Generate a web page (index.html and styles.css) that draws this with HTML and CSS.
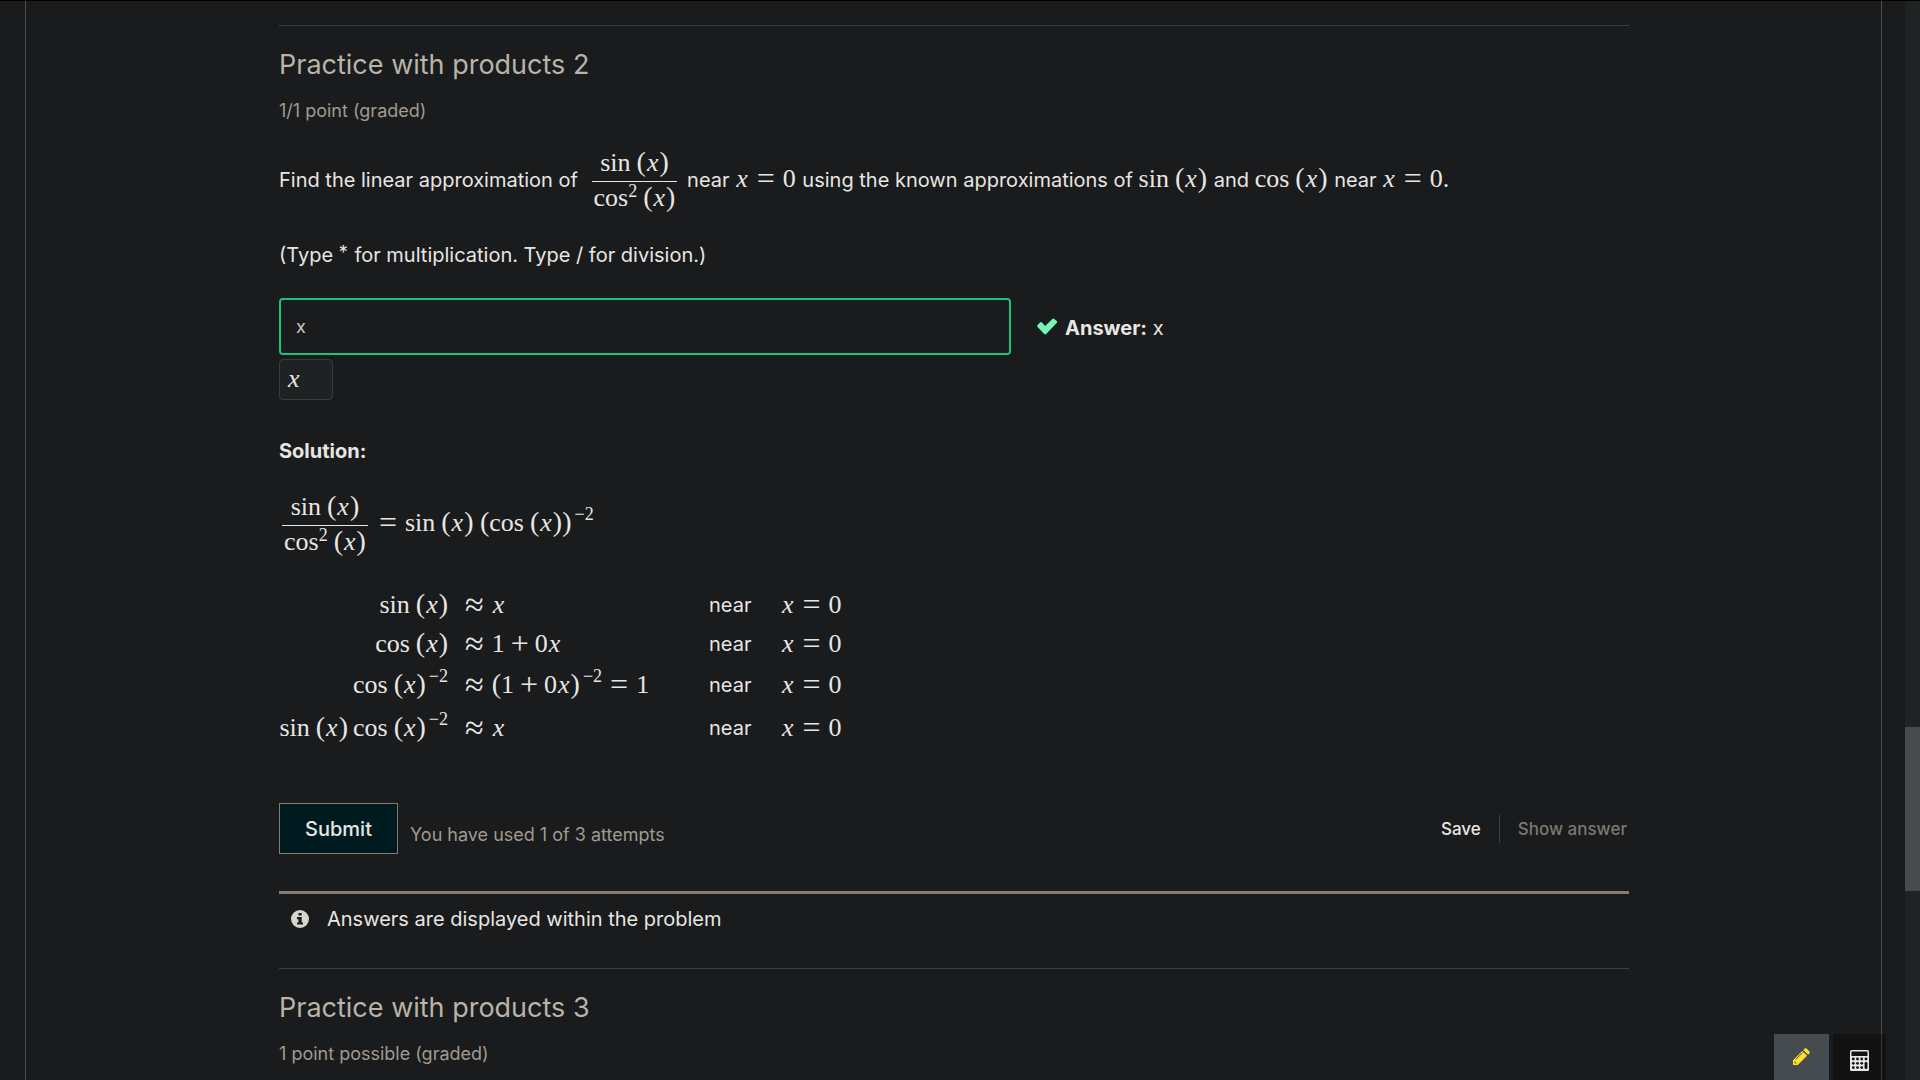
FILE: index.html
```html
<!DOCTYPE html>
<html lang="en">
<head>
<meta charset="utf-8">
<title>Practice with products</title>
<link rel="stylesheet" href="styles.css">
</head>
<body>
<div class="page">
  <main class="frame">
    <section class="problem">
      <h3 class="title">Practice with products 2</h3>
      <div class="progress">1/1 point (graded)</div>
      <p class="statement">Find the linear approximation of <span class="math frac"><span class="num"><span class="fn">sin</span><span class="par">(</span><i>x</i><span class="par">)</span></span><span class="den"><span class="fn">cos<sup class="sq">2</sup></span><span class="par">(</span><i>x</i><span class="par">)</span></span></span> near <span class="math"><i>x</i><span class="rel">=</span>0</span> using the known approximations of <span class="math"><span class="fn">sin</span><span class="par">(</span><i>x</i><span class="par">)</span></span> and <span class="math"><span class="fn">cos</span><span class="par">(</span><i>x</i><span class="par">)</span></span> near <span class="math"><i>x</i><span class="rel">=</span>0.</span></p>
      <p class="hint">(Type <sup class="star">*</sup> for multiplication. Type / for division.)</p>
      <div class="response">
        <input class="answer-input" type="text" value="x" aria-label="Your answer">
        <svg class="check" viewBox="0 0 22 17" aria-hidden="true"><path d="M2 6.500l2-2q1-.8 2 0l3.200 3.400L16.300.900q1-1 2 0l2.400 2.200q.9 1 0 2L10.200 16q-1 .9-2 0L1.600 9q-1-1.200.4-2.500z"/></svg>
        <p class="answer"><strong>Answer:</strong> x</p>
      </div>
      <div class="preview math"><i>x</i></div>

      <h4 class="solution">Solution:</h4>
      <p class="equation"><span class="math frac"><span class="num"><span class="fn">sin</span><span class="par">(</span><i>x</i><span class="par">)</span></span><span class="den"><span class="fn">cos<sup class="sq">2</sup></span><span class="par">(</span><i>x</i><span class="par">)</span></span></span><span class="math"><span class="rel">=</span><span class="fn">sin</span><span class="par">(</span><i>x</i><span class="par">)</span> <span class="par">(</span><span class="fn">cos</span><span class="par">(</span><i>x</i><span class="par">))</span><sup>−2</sup></span></p>
      <table class="align">
        <tr>
          <td class="lhs math"><span class="fn">sin</span><span class="par">(</span><i>x</i><span class="par">)</span></td>
          <td class="rhs math"><span class="approx">≈</span><i>x</i></td>
          <td class="near">near</td>
          <td class="math"><i>x</i><span class="rel">=</span>0</td>
        </tr>
        <tr>
          <td class="lhs math"><span class="fn">cos</span><span class="par">(</span><i>x</i><span class="par">)</span></td>
          <td class="rhs math"><span class="approx">≈</span>1<span class="op">+</span>0<i>x</i></td>
          <td class="near">near</td>
          <td class="math"><i>x</i><span class="rel">=</span>0</td>
        </tr>
        <tr class="tall">
          <td class="lhs math"><span class="fn">cos</span><span class="par">(</span><i>x</i><span class="par">)</span><sup>−2</sup></td>
          <td class="rhs math"><span class="approx">≈</span><span class="par">(</span>1<span class="op">+</span>0<i>x</i><span class="par">)</span><sup>−2</sup><span class="rel">=</span>1</td>
          <td class="near">near</td>
          <td class="math"><i>x</i><span class="rel">=</span>0</td>
        </tr>
        <tr class="tall">
          <td class="lhs math"><span class="fn">sin</span><span class="par">(</span><i>x</i><span class="par">)</span><span class="gap"></span><span class="fn">cos</span><span class="par">(</span><i>x</i><span class="par">)</span><sup>−2</sup></td>
          <td class="rhs math"><span class="approx">≈</span><i>x</i></td>
          <td class="near">near</td>
          <td class="math"><i>x</i><span class="rel">=</span>0</td>
        </tr>
      </table>

      <div class="actions">
        <button class="submit" type="button">Submit</button>
        <span class="attempts">You have used 1 of 3 attempts</span>
        <button class="link-button" type="button">Save</button>
        <button class="link-button last" type="button" disabled>Show answer</button>
      </div>
      <div class="notice">
        <svg class="info" viewBox="0 0 18 18" aria-hidden="true"><circle cx="9" cy="9" r="9"/><path d="M7.500 3h3.200v2.600H7.500zM6 7h4.700v5.400H12v2.200H6v-2.200h1.500V9.200H6z"/></svg>
        <span>Answers are displayed within the problem</span>
      </div>
    </section>
    <section class="problem">
      <h3 class="title">Practice with products 3</h3>
      <div class="progress">1 point possible (graded)</div>
    </section>
  </main>
  <div class="scrollbar"><div class="thumb"></div></div>
  <div class="tools">
    <button class="tool notes" type="button" aria-label="Notes">
      <svg width="18" height="18" viewBox="0 0 18 18" aria-hidden="true"><path d="M1 12.200 10.300 2.900l4.800 4.800L5.800 17H1zM11.300 1.900l1.300-1.300q1-.9 2 0l2.800 2.800q.9 1 0 2l-1.300 1.300z" fill="#ffe12e"/><path d="M3.800 11.300 10.500 4.700" stroke="#454b4e" stroke-width="1"/><path d="M2.400 13.200l2.500 2.400H3.600L2.400 14.500z" fill="#454b4e"/></svg>
    </button>
    <button class="tool calc" type="button" aria-label="Calculator">
      <svg width="19" height="21" viewBox="0 0 19 21" aria-hidden="true"><rect x="0" y="0" width="19" height="21" rx="1.500" fill="#e8e6e3"/><path d="M1.500 1.500h16v4.500h-16z" fill="#121314"/><g fill="#121314"><circle cx="3.300" cy="9" r="1.400"/><circle cx="7.500" cy="9" r="1.400"/><circle cx="11.700" cy="9" r="1.400"/><circle cx="16" cy="9" r="1.400"/><circle cx="3.300" cy="13.300" r="1.400"/><circle cx="7.500" cy="13.300" r="1.400"/><circle cx="11.700" cy="13.300" r="1.400"/><circle cx="3.300" cy="17.600" r="1.400"/><circle cx="7.500" cy="17.600" r="1.400"/><circle cx="11.700" cy="17.600" r="1.400"/><rect x="14.600" y="12" width="2.800" height="7" rx="1.300"/></g></svg>
    </button>
  </div>
</div>
</body>
</html>
```

FILE: styles.css
```css
* { box-sizing: border-box; }

body {
  margin: 0;
  background: #1a1b1c;
  color: #e8e6e3;
  font: 20px/30px Inter, "Liberation Sans", sans-serif;
}

p, h3, h4 { margin: 0; }

button {
  font-family: inherit;
  color: inherit;
  background: none;
  border: 0;
  padding: 0;
}

.page {
  position: relative;
  display: flex;
  height: 100vh;
  overflow: hidden;
  border-top: 1px solid #000;
}

.frame {
  flex: 1;
  height: max-content;
  min-height: 100%;
  margin: 0 23px 0 25px;
  padding: 24px 252px 0 253px;
  border: solid #4b4c4e;
  border-width: 0 1px;
}

.problem {
  border-top: 1px solid #3c3e41;
  padding: 21px 0 34px;
}

.title {
  font-size: 27px;
  line-height: 36px;
  font-weight: 400;
  color: #b9b3a9;
}

.progress {
  margin-top: 15px;
  font-size: 18px;
  line-height: 26px;
  color: #a09a90;
}

.statement { margin-top: 21px; }
.hint { margin-top: 22px; }
.star { margin-right: 1px; font-size: 18px; line-height: 0; vertical-align: 3px; }

/* Math */
.math {
  font-family: "Liberation Serif", serif;
  font-size: 26px;
}
.math i { margin: 0 1px; }
.math sup { font-size: 18px; line-height: 0; vertical-align: 11px; margin-left: 3px; }
.math .sq { vertical-align: 9px; margin-left: 0; }
.fn { margin-right: 6px; }
.par { font-size: 28px; line-height: 0; }
.rel { margin: 0 8px; font-size: 32px; line-height: 0; vertical-align: -2px; }
.op { margin: 0 6px; font-size: 32px; line-height: 0; vertical-align: -2px; }
.approx { margin-right: 8px; font-size: 34px; line-height: 0; vertical-align: -3px; }
.gap { margin-left: 5px; }

.frac {
  display: inline-block;
  vertical-align: middle;
  margin: 0 3px;
  text-align: center;
}
.statement .math { margin-right: 1px; }
.statement .frac { margin: 0 4px 0 8px; }
.num, .den { display: block; padding: 0 2px; }
.num { line-height: 36px; border-bottom: 1px solid #e8e6e3; }
.den { line-height: 32px; padding-bottom: 4px; }

.response {
  display: flex;
  align-items: center;
  margin-top: 28px;
}
.answer-input {
  width: 732px;
  height: 57px;
  padding: 0 15px;
  border: 2px solid #14c57a;
  border-radius: 4px;
  background: #191b1c;
  color: #cfcac2;
  font: 18px/24px Inter, "Liberation Sans", sans-serif;
}
.check { width: 22px; height: 17px; margin-left: 25px; fill: #77f2b9; }
.answer { margin-left: 7px; padding-top: 2px; }

.preview {
  width: 54px;
  height: 41px;
  margin-top: 4px;
  padding: 0 7px;
  border: 1px solid #393d40;
  border-radius: 4px;
  background: #1f2223;
  line-height: 38px;
}

.solution { margin-top: 36px; font-size: 20px; font-weight: 700; }
.equation { margin-top: 23px; }

.align { margin-top: 23px; border-collapse: collapse; }
.align td { height: 39px; padding: 0; vertical-align: middle; white-space: nowrap; }
.align .tall td { height: 43px; }
.align .lhs { text-align: right; min-width: 169px; }
.align .rhs { width: 261px; padding-left: 17px; }
.align .near { width: 72px; }

.actions {
  display: flex;
  align-items: center;
  margin-top: 54px;
}
.submit {
  width: 119px;
  height: 51px;
  border: 1px solid #857c6f;
  background: #001b20;
  font-size: 20px;
  font-weight: 500;
}
.attempts { flex: 1; margin-left: 12px; padding-top: 13px; font-size: 18px; color: #a09a90; }
.link-button {
  height: 28px;
  padding: 0 18px;
  font-size: 17px;
  font-weight: 500;
}
.link-button.last { border-left: 1px solid #3c3e41; padding-right: 2px; color: #7c7871; }

.notice {
  display: flex;
  align-items: center;
  gap: 18px;
  margin-top: 37px;
  padding: 10px 12px 0;
  border-top: 3px solid #857c6f;
}
.info { width: 18px; height: 18px; fill: #d8d4cf; }
.info path { fill: #1a1b1c; }

.scrollbar { flex: 0 0 15px; background: #1f2324; }
.thumb { height: 164px; margin-top: 726px; background: #454a4d; }

.tools {
  position: absolute;
  right: 34px;
  bottom: 0;
  display: flex;
  gap: 4px;
}
.tool { display: flex; justify-content: center; height: 46px; }
.notes { width: 55px; padding: 14px 1px 0 0; background: #454b4e; }
.calc { width: 53px; padding: 16px 1px 0 0; background: rgba(0, 0, 0, .3); }
```
